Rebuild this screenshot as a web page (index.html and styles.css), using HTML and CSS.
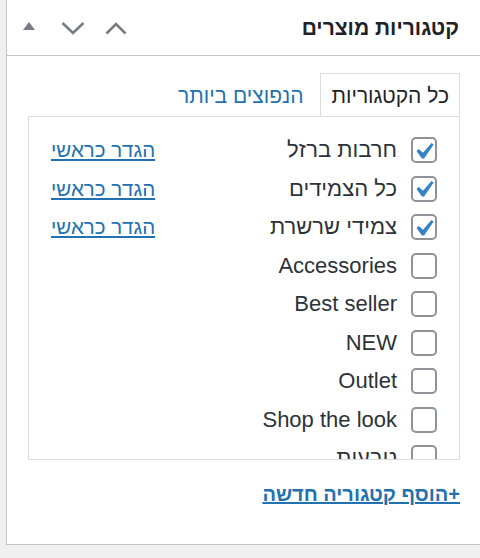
FILE: index.html
```html
<!DOCTYPE html>
<html lang="he" dir="rtl">
<head>
<meta charset="utf-8">
<link rel="stylesheet" href="styles.css">
</head>
<body>
<div class="postbox">
  <div class="postbox-header">
    <h2 class="hndle">קטגוריות מוצרים</h2>
    <div class="handle-actions">
      <button class="hbtn" type="button" aria-label="הזז למעלה">
        <svg width="24" height="24" viewBox="0 0 24 24"><path d="M1.5 17.5 L11 8 L20.5 17.5" fill="none" stroke="#787c82" stroke-width="2.6"/></svg>
      </button>
      <button class="hbtn" type="button" aria-label="הזז למטה">
        <svg width="24" height="24" viewBox="0 0 24 24"><path d="M1.5 7 L12 17 L22.5 7" fill="none" stroke="#787c82" stroke-width="2.6"/></svg>
      </button>
      <button class="hbtn" type="button" aria-label="הצג/הסתר">
        <svg width="24" height="24" viewBox="0 0 24 24"><path d="M6 14 L12 6 L18 14 Z" fill="#787c82"/></svg>
      </button>
    </div>
  </div>
  <div class="inside">
    <ul class="tabs">
      <li class="tab active">כל הקטגוריות</li>
      <li class="tab"><a href="#">הנפוצים ביותר</a></li>
    </ul>
    <div class="panel">
      <ul class="cats">
        <li class="row"><label class="lbl"><span class="cb"><svg class="chk" width="33" height="33" viewBox="0 0 20 20"><path d="M14.83 4.89l1.34.94-5.81 8.38H9.02L5.78 9.67l1.34-1.25 2.57 2.4z" fill="#3582c4"/></svg></span><span class="name">חרבות ברזל</span></label><a class="primary" href="#">הגדר כראשי</a></li>
        <li class="row"><label class="lbl"><span class="cb"><svg class="chk" width="33" height="33" viewBox="0 0 20 20"><path d="M14.83 4.89l1.34.94-5.81 8.38H9.02L5.78 9.67l1.34-1.25 2.57 2.4z" fill="#3582c4"/></svg></span><span class="name">כל הצמידים</span></label><a class="primary" href="#">הגדר כראשי</a></li>
        <li class="row"><label class="lbl"><span class="cb"><svg class="chk" width="33" height="33" viewBox="0 0 20 20"><path d="M14.83 4.89l1.34.94-5.81 8.38H9.02L5.78 9.67l1.34-1.25 2.57 2.4z" fill="#3582c4"/></svg></span><span class="name">צמידי שרשרת</span></label><a class="primary" href="#">הגדר כראשי</a></li>
        <li class="row"><label class="lbl"><span class="cb"></span><span class="name">Accessories</span></label></li>
        <li class="row"><label class="lbl"><span class="cb"></span><span class="name">Best seller</span></label></li>
        <li class="row"><label class="lbl"><span class="cb"></span><span class="name">NEW</span></label></li>
        <li class="row"><label class="lbl"><span class="cb"></span><span class="name">Outlet</span></label></li>
        <li class="row"><label class="lbl"><span class="cb"></span><span class="name">Shop the look</span></label></li>
        <li class="row"><label class="lbl"><span class="cb"></span><span class="name">טבעות</span></label></li>
      </ul>
    </div>
    <a class="add" href="#">+הוסף קטגוריה חדשה</a>
  </div>
</div>
</body>
</html>
```
FILE: styles.css
```css
* { box-sizing: border-box; }
html, body { margin: 0; }
body {
  background: #f0f0f1;
  font-family: "Liberation Sans", Arial, sans-serif;
  color: #1d2327;
  padding-left: 6px;
  height: 558px;
  overflow: hidden;
}
.postbox {
  background: #fff;
  border-left: 1px solid #c3c4c7;
  border-bottom: 1px solid #c3c4c7;
  padding-bottom: 38px;
}
.postbox-header {
  display: flex;
  align-items: center;
  justify-content: space-between;
  height: 56px;
  border-bottom: 1px solid #c3c4c7;
}
.hndle {
  margin: 0;
  padding: 0 21px 0 0;
  font-size: 21px;
  font-weight: 700;
  color: #1d2327;
}
.handle-actions { display: flex; }
.hbtn {
  width: 44px;
  height: 55px;
  padding: 0;
  border: 0;
  background: none;
  display: flex;
  align-items: center;
  justify-content: center;
}
.inside { padding: 17px 20px 0 21px; }
.tabs {
  list-style: none;
  margin: 0;
  padding: 0;
  display: flex;
  gap: 6px;
}
.tab {
  height: 43px;
  line-height: 43px;
  padding: 0 10px;
  font-size: 21px;
  border: 1px solid transparent;
  border-bottom: 0;
}
.tab.active { border-color: #dcdcde; color: #1d2327; }
.tab a { color: #2271b1; text-decoration: none; }
.panel {
  height: 344px;
  border: 1px solid #dcdcde;
  overflow: hidden;
}
.cats {
  list-style: none;
  margin: 0;
  padding: 14px 22px 0 22px;
}
.row {
  height: 38.5px;
  display: flex;
  align-items: center;
  justify-content: space-between;
}
.lbl {
  display: flex;
  align-items: center;
  gap: 14px;
  font-size: 22px;
  color: #2c3338;
}
.cb {
  width: 26px;
  height: 26px;
  border: 2px solid #8f9297;
  border-radius: 5px;
  display: flex;
  align-items: center;
  justify-content: center;
  flex: none;
}
.chk { flex: none; overflow: visible; margin-top: 2px; margin-left: -2px; }
.primary {
  color: #2271b1;
  font-size: 20.5px;
  text-decoration: underline;
}
.add {
  display: inline-block;
  margin-top: 22px;
  line-height: 24px;
  color: #2271b1;
  font-weight: 700;
  font-size: 20px;
  text-decoration: underline;
}
```
